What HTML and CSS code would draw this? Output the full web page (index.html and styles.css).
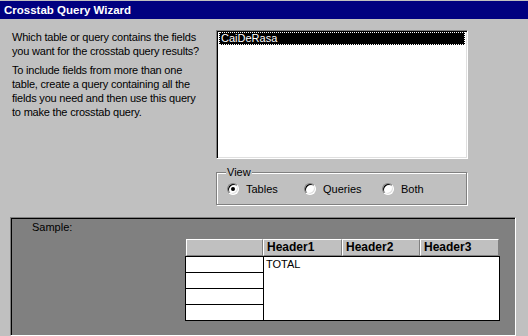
FILE: index.html
```html
<!DOCTYPE html>
<html>
<head>
    <title>Crosstab Query Wizard</title>
    <link rel="stylesheet" href="styles.css">
</head>
<body>
    <div class="window">
        <div class="titlebar">Crosstab Query Wizard</div>
        <div class="top">
            <div class="intro">
                <p>Which table or query contains the fields<br>you want for the crosstab query results?</p>
                <p>To include fields from more than one<br>table, create a query containing all the<br>fields you need and then use this query<br>to make the crosstab query.</p>
            </div>
            <div class="side">
                <div class="listbox">
                    <div class="item selected">CaiDeRasa</div>
                </div>
                <div class="view">
                    <span class="legend">View</span>
                    <div class="options">
                        <label class="option"><span class="radio checked"></span>Tables</label>
                        <label class="option wide"><span class="radio"></span>Queries</label>
                        <label class="option"><span class="radio"></span>Both</label>
                    </div>
                </div>
            </div>
        </div>
        <div class="sample">
            <div class="sample-label">Sample:</div>
            <div class="grid">
                <div class="head">
                    <div class="hcell first"></div>
                    <div class="hcell w79">Header1</div>
                    <div class="hcell w78">Header2</div>
                    <div class="hcell w79">Header3</div>
                </div>
                <div class="body">
                    <div class="rows">
                        <div class="row"></div>
                        <div class="row"></div>
                        <div class="row"></div>
                        <div class="row"></div>
                    </div>
                    <div class="values">TOTAL</div>
                </div>
            </div>
        </div>
    </div>
</body>
</html>
```

FILE: styles.css
```css
body {
    margin: 0;
    background: #c0c0c0;
    font-family: "Liberation Sans", Arial, sans-serif;
    font-size: 11px;
    color: #000;
}

.window {
    height: 336px;
    padding-top: 1px;
    box-sizing: border-box;
    overflow: hidden;
}

.titlebar {
    height: 18px;
    line-height: 18px;
    padding-left: 4px;
    background: #000080;
    color: #fff;
    font-weight: bold;
    font-size: 11.5px;
}

.top {
    display: flex;
    margin-top: 11px;
}

.intro {
    width: 204px;
    padding-left: 12px;
    line-height: 14px;
    letter-spacing: -0.2px;
    white-space: nowrap;
}

.intro p {
    margin: 0;
}

.intro p + p {
    margin-top: 5px;
}

.side {
    width: 252px;
}

.listbox {
    height: 129px;
    box-sizing: border-box;
    background: #fff;
    border: 1px solid;
    border-color: #808080 #fff #fff #808080;
    box-shadow: inset 1px 1px 0 #000, inset -1px -1px 0 #dfdfdf;
    padding: 1px 2px;
}

.item {
    height: 13px;
    line-height: 13px;
    padding-left: 2px;
}

.item.selected {
    background: #000;
    color: #fff;
    outline: 1px dotted #fff;
    outline-offset: -1px;
}

.view {
    position: relative;
    width: 251px;
    height: 33px;
    margin-top: 13px;
    box-sizing: border-box;
    border: 1px solid #808080;
    box-shadow: 1px 1px 0 #fff, inset 1px 1px 0 #fff;
    padding: 10px 0 0 10px;
}

.legend {
    position: absolute;
    top: -8px;
    left: 9px;
    padding: 0 1px;
    background: #c0c0c0;
    line-height: 14px;
}

.options {
    display: flex;
}

.option {
    display: flex;
    align-items: center;
    gap: 7px;
    width: 77px;
    height: 12px;
}

.option.wide {
    width: 78px;
}

.radio {
    position: relative;
    width: 12px;
    height: 12px;
    box-sizing: border-box;
    border-radius: 50%;
    background: #fff;
    border: 1px solid;
    border-color: #808080 #fff #fff #808080;
    box-shadow: inset 1px 1px 0 #000, inset -1px -1px 0 #dfdfdf;
}

.radio.checked::after {
    content: "";
    position: absolute;
    left: 3px;
    top: 3px;
    width: 4px;
    height: 4px;
    border-radius: 50%;
    background: #000;
}

.sample {
    width: 506px;
    height: 119px;
    margin: 12px 0 0 10px;
    box-sizing: border-box;
    background: #808080;
    border: 1px solid;
    border-color: #808080 #fff #fff #808080;
    box-shadow: inset 1px 1px 0 #000;
    padding-top: 2px;
}

.sample-label {
    padding-left: 21px;
    line-height: 14px;
}

.grid {
    margin: 5px 0 0 174px;
    width: 315px;
}

.head {
    display: flex;
    margin-left: 1px;
    height: 17px;
}

.hcell {
    box-sizing: border-box;
    height: 17px;
    line-height: 15px;
    padding-left: 3px;
    background: #c0c0c0;
    border-top: 1px solid #fff;
    border-left: 1px solid #fff;
    border-right: 1px solid #808080;
    border-bottom: 1px solid #808080;
    font-weight: bold;
    font-size: 12px;
}

.hcell.first {
    width: 77px;
}

.hcell.w79 {
    width: 79px;
}

.hcell.w78 {
    width: 78px;
}

.body {
    display: flex;
    height: 65px;
    background: #fff;
    border: 1px solid #000;
    box-sizing: border-box;
}

.rows {
    width: 77px;
    border-right: 1px solid #000;
}

.row {
    height: 15px;
    border-bottom: 1px solid #000;
}

.row:last-child {
    border-bottom: none;
}

.values {
    flex: 1;
    padding: 1px 0 0 2px;
    line-height: 13px;
}
```
